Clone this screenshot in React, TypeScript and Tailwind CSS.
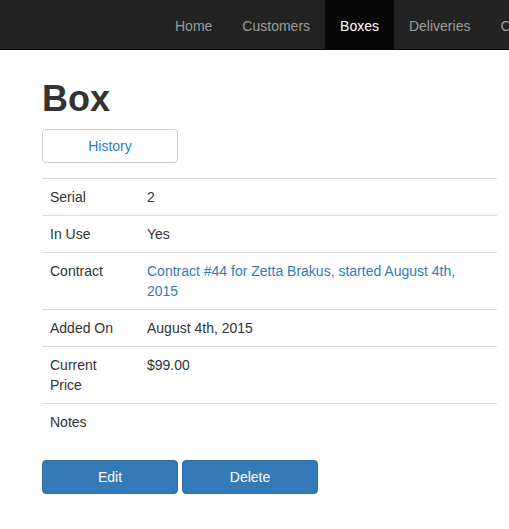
const navItems = [
	{ label: "Home", active: false },
	{ label: "Customers", active: false },
	{ label: "Boxes", active: true },
	{ label: "Deliveries", active: false },
	{ label: "Contracts", active: false },
];

const rows: { label: string; value: string; link?: boolean }[] = [
	{ label: "Serial", value: "2" },
	{ label: "In Use", value: "Yes" },
	{
		label: "Contract",
		value: "Contract #44 for Zetta Brakus, started August 4th, 2015",
		link: true,
	},
	{ label: "Added On", value: "August 4th, 2015" },
	{ label: "Current Price", value: "$99.00" },
	{ label: "Notes", value: "" },
];

export default function App() {
	return (
		<div
			className="min-h-screen bg-white text-[14px] leading-[20px] text-[#333]"
			style={{ fontFamily: '"Liberation Sans", Arial, sans-serif' }}>
			<nav className="h-[50px] bg-[#222] border-b border-[#080808] overflow-hidden">
				<ul className="flex ml-[160px] whitespace-nowrap">
					{navItems.map((item) => (
						<li key={item.label}>
							<a
								href="#"
								className={`block px-[15px] pt-[16px] pb-[13px] leading-[20px] ${
									item.active ? "bg-[#080808] text-white" : "text-[#9d9d9d]"
								}`}>
								{item.label}
							</a>
						</li>
					))}
				</ul>
			</nav>

			<div className="px-[42px] pr-[12px]">
				<h1 className="mt-[29px] mb-[10px] text-[36px] leading-[39.6px] font-bold">
					Box
				</h1>
				<button className="w-[136px] h-[34px] border border-[#ccc] rounded-[4px] bg-white text-[#337ab7]">
					History
				</button>

				<table className="w-full mt-[15px] mb-[20px] border-collapse">
					<tbody>
						{rows.map((row) => (
							<tr key={row.label} className="border-t border-[#ddd] align-top">
								<td className="w-[97px] p-[8px]">{row.label}</td>
								<td className="p-[8px]">
									{row.link ? (
										<a href="#" className="text-[#337ab7]">
											{row.value}
										</a>
									) : (
										row.value
									)}
								</td>
							</tr>
						))}
					</tbody>
				</table>

				<div className="flex gap-[4px]">
					<button className="w-[136px] h-[34px] rounded-[4px] bg-[#337ab7] border border-[#2e6da4] text-white">
						Edit
					</button>
					<button className="w-[136px] h-[34px] rounded-[4px] bg-[#337ab7] border border-[#2e6da4] text-white">
						Delete
					</button>
				</div>
			</div>
		</div>
	);
}
